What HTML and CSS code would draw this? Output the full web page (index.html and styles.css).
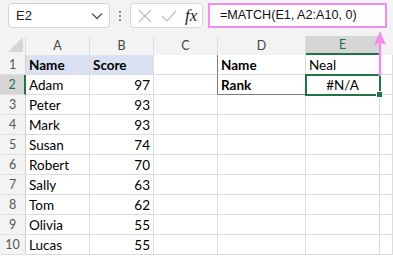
FILE: index.html
```html
<!DOCTYPE html>
<html>
<head>
  <meta charset="UTF-8">
  <title>MATCH</title>
  <link rel="stylesheet" href="styles.css">
</head>
<body>
  <div class="app">
    <div class="toolbar">
      <div class="namebox">
        <span>E2</span>
        <svg class="chev" width="12" height="8" viewBox="0 0 12 8"><path d="M1 1.5 L6 6.5 L11 1.5" fill="none" stroke="#555" stroke-width="1.3"/></svg>
      </div>
      <div class="grip"><i></i><i></i><i></i></div>
      <div class="fbtns">
        <svg width="14" height="14" viewBox="0 0 14 14"><path d="M1 1 L13 13 M13 1 L1 13" stroke="#bdbdbd" stroke-width="1.2"/></svg>
        <svg width="16" height="12" viewBox="0 0 16 12"><path d="M1 6 L6 11 L15 1" fill="none" stroke="#bdbdbd" stroke-width="1.2"/></svg>
        <span class="fx">fx</span>
      </div>
      <div class="formula">=MATCH(E1, A2:A10, 0)</div>
    </div>

    <div class="sheet">
      <div class="corner"><svg width="15" height="15" viewBox="0 0 15 15"><path d="M15 0 L15 15 L0 15 Z" fill="#d6d6d6"/></svg></div>
      <div class="ch">A</div>
      <div class="ch">B</div>
      <div class="ch">C</div>
      <div class="ch">D</div>
      <div class="ch active">E</div>
      <div class="ch last"></div>

      <div class="rh">1</div>
      <div class="c hd">Name</div>
      <div class="c hd">Score</div>
      <div class="c box-l"></div>
      <div class="c b">Name</div>
      <div class="c box-r">Neal</div>
      <div class="c"></div>

      <div class="rh active">2</div>
      <div class="c">Adam</div>
      <div class="c num">97</div>
      <div class="c box-l"></div>
      <div class="c b box-b">Rank</div>
      <div class="c box-r box-b sel">#N/A</div>
      <div class="c"></div>

      <div class="rh">3</div>
      <div class="c">Peter</div>
      <div class="c num">93</div>
      <div class="c"></div><div class="c"></div><div class="c"></div><div class="c"></div>

      <div class="rh">4</div>
      <div class="c">Mark</div>
      <div class="c num">93</div>
      <div class="c"></div><div class="c"></div><div class="c"></div><div class="c"></div>

      <div class="rh">5</div>
      <div class="c">Susan</div>
      <div class="c num">74</div>
      <div class="c"></div><div class="c"></div><div class="c"></div><div class="c"></div>

      <div class="rh">6</div>
      <div class="c">Robert</div>
      <div class="c num">70</div>
      <div class="c"></div><div class="c"></div><div class="c"></div><div class="c"></div>

      <div class="rh">7</div>
      <div class="c">Sally</div>
      <div class="c num">63</div>
      <div class="c"></div><div class="c"></div><div class="c"></div><div class="c"></div>

      <div class="rh">8</div>
      <div class="c">Tom</div>
      <div class="c num">62</div>
      <div class="c"></div><div class="c"></div><div class="c"></div><div class="c"></div>

      <div class="rh">9</div>
      <div class="c">Olivia</div>
      <div class="c num">55</div>
      <div class="c"></div><div class="c"></div><div class="c"></div><div class="c"></div>

      <div class="rh">10</div>
      <div class="c">Lucas</div>
      <div class="c num">55</div>
      <div class="c"></div><div class="c"></div><div class="c"></div><div class="c"></div>
    </div>

    <svg class="arrow" width="14" height="45" viewBox="0 0 14 45">
      <path d="M7 0 L13 14 L8.2 12 L8.2 45 L5.8 45 L5.8 12 L1 14 Z" fill="#f48cef"/>
    </svg>
  </div>
</body>
</html>
```

FILE: styles.css
```css
body {
  margin: 0;
  font-family: Lato, "Liberation Sans", sans-serif;
  background: #fff;
}
.app {
  position: relative;
  width: 393px;
  height: 256px;
  overflow: hidden;
}
.toolbar {
  height: 36px;
  background: #f3f3f3;
  display: flex;
  align-items: flex-start;
  padding-top: 3px;
  box-sizing: border-box;
}
.namebox {
  margin-left: 8px;
  width: 102px;
  height: 25px;
  box-sizing: border-box;
  background: #fff;
  border: 1px solid #d4d4d4;
  border-radius: 4px;
  display: flex;
  align-items: center;
  justify-content: space-between;
  padding: 0 6px 0 7px;
  font-family: "Liberation Sans", sans-serif;
  font-size: 13px;
  color: #222;
}
.chev {
  margin-top: 1px;
}
.grip {
  width: 20px;
  height: 25px;
  display: flex;
  flex-direction: column;
  align-items: center;
  justify-content: center;
  gap: 2px;
}
.grip i {
  display: block;
  width: 2px;
  height: 2px;
  background: #8a8a8a;
}
.fbtns {
  width: 73px;
  height: 25px;
  box-sizing: border-box;
  background: #fff;
  border: 1px solid #d8d8d8;
  border-radius: 4px;
  display: flex;
  align-items: center;
  gap: 9px;
  padding-left: 7px;
}
.fx {
  font-family: "Liberation Serif", serif;
  font-style: italic;
  font-size: 17px;
  color: #222;
  margin-left: -1px;
}
.formula {
  margin-left: 5px;
  width: 179px;
  height: 25px;
  box-sizing: border-box;
  background: #fff;
  border: 2px solid #f48cef;
  padding-left: 10px;
  font-family: "Liberation Sans", sans-serif;
  font-size: 12.6px;
  line-height: 21px;
  color: #111;
}
.sheet {
  display: grid;
  grid-template-columns: 26px 64px 64px 64px 88px 74px 13px;
  grid-template-rows: 19px repeat(10, 20px);
  font-size: 13.5px;
}
.corner {
  background: #f3f3f3;
  border-right: 1px solid #e0e0e0;
  box-sizing: border-box;
  display: flex;
  align-items: flex-end;
  justify-content: flex-end;
  padding: 0 2px 3px 0;
}
.ch {
  background: #f3f3f3;
  border-right: 1px solid #dedede;
  box-sizing: border-box;
  text-align: center;
  font-size: 12.5px;
  line-height: 19px;
  color: #444;
}
.ch.last {
  border-right: none;
}
.ch.active {
  background: #d6d6d6;
  color: #217346;
  border-bottom: 2px solid #217346;
  line-height: 18px;
}
.rh {
  background: #f3f3f3;
  border-bottom: 1px solid #e0e0e0;
  border-right: 1px solid #d0d0d0;
  box-sizing: border-box;
  text-align: center;
  font-size: 12.5px;
  line-height: 20px;
  color: #555;
}
.rh.active {
  background: #d6d6d6;
  color: #217346;
  border-right: 2px solid #217346;
}
.c {
  border-right: 1px solid #dcdcdc;
  border-bottom: 1px solid #dcdcdc;
  box-sizing: border-box;
  padding: 0 3px;
  line-height: 20px;
  color: #000;
  white-space: nowrap;
}
.hd {
  background: #d9e1f2;
  font-weight: bold;
}
.b {
  font-weight: bold;
}
.num {
  text-align: right;
}
.box-l {
  border-right-color: #7a7a7a;
}
.box-r {
  border-right-color: #7a7a7a;
}
.box-b {
  border-bottom-color: #7a7a7a;
}
.sel {
  position: relative;
  text-align: center;
}
.sel::after {
  content: "";
  position: absolute;
  left: -1px;
  top: -1px;
  right: -2px;
  bottom: -2px;
  border: 2px solid #217346;
}
.sel::before {
  content: "";
  position: absolute;
  right: -4px;
  bottom: -4px;
  width: 5px;
  height: 5px;
  background: #217346;
  border: 1px solid #fff;
  z-index: 1;
}
.arrow {
  position: absolute;
  left: 373px;
  top: 31px;
}
```
